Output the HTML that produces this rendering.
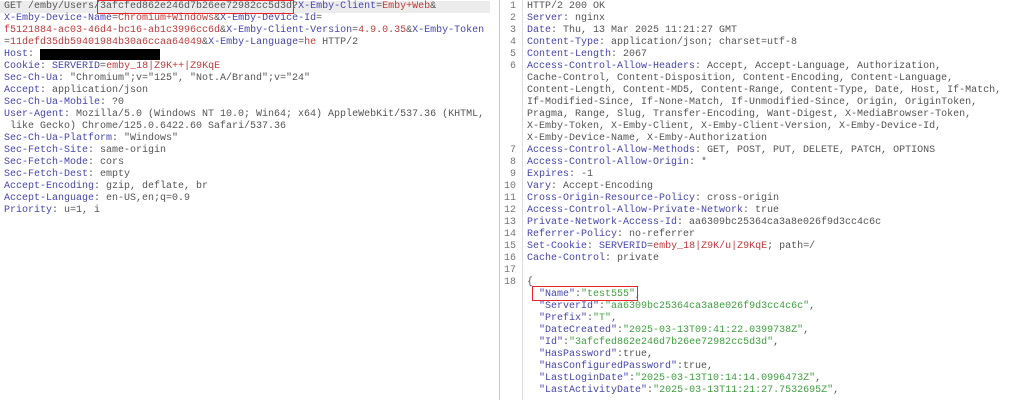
<!DOCTYPE html>
<html><head><meta charset="utf-8"><style>
body{margin:0;width:1009px;height:400px;background:#fff;overflow:hidden;font-family:"Liberation Mono",monospace;font-size:10px;color:#555}
pre{margin:0;font:inherit;line-height:12px;white-space:pre}
.k{color:#4646b0}.v{color:#c03a3a}.s{color:#3fa03f}
#l{position:absolute;left:4px;top:1px}
#hl{position:absolute;left:0;top:1px;width:490px;height:12px;background:#ececec}
#div{position:absolute;left:499px;top:0;width:1px;height:400px;background:#ccc}
#g{position:absolute;left:522px;top:0;width:1px;height:400px;background:#ddd}
#n{position:absolute;left:500px;width:16px;top:1px;text-align:right;color:#777}
#r{position:absolute;left:527px;top:1px}
.box{position:absolute;border:1.5px solid #e8262a;box-sizing:border-box}
</style></head><body>
<div id="hl"></div>
<pre id="l">GET /emby/Users/3afcfed862e246d7b26ee72982cc5d3d?<span class="k">X-Emby-Client</span>=<span class="v">Emby+Web</span>&amp;
<span class="k">X-Emby-Device-Name</span>=<span class="v">Chromium+Windows</span>&amp;<span class="k">X-Emby-Device-Id</span>=
<span class="v">f5121884-ac03-46d4-bc16-ab1c3996cc6d</span>&amp;<span class="k">X-Emby-Client-Version</span>=<span class="v">4.9.0.35</span>&amp;<span class="k">X-Emby-Token</span>
=<span class="v">11defd35db59401984b30a6ccaa64049</span>&amp;<span class="k">X-Emby-Language</span>=<span class="v">he</span> HTTP/2
<span class="k">Host</span>: <span style="background:#000;color:#000">xxxxxxxxxxxxxxxxxxxx</span>
<span class="k">Cookie</span>: <span class="k">SERVERID</span>=<span class="v">emby_18|Z9K++|Z9KqE</span>
<span class="k">Sec-Ch-Ua</span>: "Chromium";v="125", "Not.A/Brand";v="24"
<span class="k">Accept</span>: application/json
<span class="k">Sec-Ch-Ua-Mobile</span>: ?0
<span class="k">User-Agent</span>: Mozilla/5.0 (Windows NT 10.0; Win64; x64) AppleWebKit/537.36 (KHTML,
 like Gecko) Chrome/125.0.6422.60 Safari/537.36
<span class="k">Sec-Ch-Ua-Platform</span>: "Windows"
<span class="k">Sec-Fetch-Site</span>: same-origin
<span class="k">Sec-Fetch-Mode</span>: cors
<span class="k">Sec-Fetch-Dest</span>: empty
<span class="k">Accept-Encoding</span>: gzip, deflate, br
<span class="k">Accept-Language</span>: en-US,en;q=0.9
<span class="k">Priority</span>: u=1, i</pre>
<div class="box" style="left:97px;top:0px;width:197px;height:14px"></div>
<div id="div"></div><div id="g"></div>
<pre id="n">1
2
3
4
5
6






7
8
9
10
11
12
13
14
15
16
17
18</pre>
<pre id="r">HTTP/2 200 OK
<span class="k">Server</span>: nginx
<span class="k">Date</span>: Thu, 13 Mar 2025 11:21:27 GMT
<span class="k">Content-Type</span>: application/json; charset=utf-8
<span class="k">Content-Length</span>: 2067
<span class="k">Access-Control-Allow-Headers</span>: Accept, Accept-Language, Authorization,
Cache-Control, Content-Disposition, Content-Encoding, Content-Language,
Content-Length, Content-MD5, Content-Range, Content-Type, Date, Host, If-Match,
If-Modified-Since, If-None-Match, If-Unmodified-Since, Origin, OriginToken,
Pragma, Range, Slug, Transfer-Encoding, Want-Digest, X-MediaBrowser-Token,
X-Emby-Token, X-Emby-Client, X-Emby-Client-Version, X-Emby-Device-Id,
X-Emby-Device-Name, X-Emby-Authorization
<span class="k">Access-Control-Allow-Methods</span>: GET, POST, PUT, DELETE, PATCH, OPTIONS
<span class="k">Access-Control-Allow-Origin</span>: *
<span class="k">Expires</span>: -1
<span class="k">Vary</span>: Accept-Encoding
<span class="k">Cross-Origin-Resource-Policy</span>: cross-origin
<span class="k">Access-Control-Allow-Private-Network</span>: true
<span class="k">Private-Network-Access-Id</span>: aa6309bc25364ca3a8e026f9d3cc4c6c
<span class="k">Referrer-Policy</span>: no-referrer
<span class="k">Set-Cookie</span>: <span class="k">SERVERID</span>=<span class="v">emby_18|Z9K/u|Z9KqE</span>; path=/
<span class="k">Cache-Control</span>: private

{
  <span class="k">"Name"</span>:<span class="s">"test555"</span>,
  <span class="k">"ServerId"</span>:<span class="s">"aa6309bc25364ca3a8e026f9d3cc4c6c"</span>,
  <span class="k">"Prefix"</span>:<span class="s">"T"</span>,
  <span class="k">"DateCreated"</span>:<span class="s">"2025-03-13T09:41:22.0399738Z"</span>,
  <span class="k">"Id"</span>:<span class="s">"3afcfed862e246d7b26ee72982cc5d3d"</span>,
  <span class="k">"HasPassword"</span>:true,
  <span class="k">"HasConfiguredPassword"</span>:true,
  <span class="k">"LastLoginDate"</span>:<span class="s">"2025-03-13T10:14:14.0996473Z"</span>,
  <span class="k">"LastActivityDate"</span>:<span class="s">"2025-03-13T11:21:27.7532695Z"</span>,</pre>
<div class="box" style="left:532px;top:286px;width:106px;height:15px"></div>
</body></html>
